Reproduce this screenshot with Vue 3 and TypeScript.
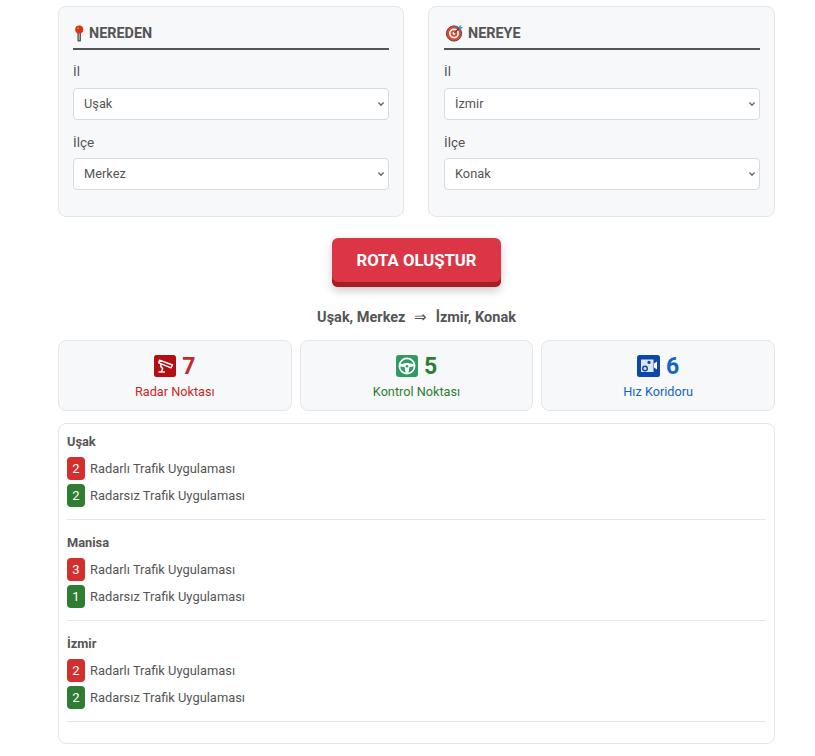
<script setup lang="ts">
type Row = { count: number; label: string; tone: 'red' | 'green' }
type Region = { name: string; rows: Row[] }

const forms = [
  { title: 'NEREDEN', il: 'Uşak', ilce: 'Merkez', kind: 'pin' },
  { title: 'NEREYE', il: 'İzmir', ilce: 'Konak', kind: 'target' },
]

const stats = [
  { count: 7, label: 'Radar Noktası', tone: 'red' },
  { count: 5, label: 'Kontrol Noktası', tone: 'green' },
  { count: 6, label: 'Hız Koridoru', tone: 'blue' },
]

const radarli = 'Radarlı Trafik Uygulaması'
const radarsiz = 'Radarsız Trafik Uygulaması'

const regions: Region[] = [
  { name: 'Uşak', rows: [{ count: 2, label: radarli, tone: 'red' }, { count: 2, label: radarsiz, tone: 'green' }] },
  { name: 'Manisa', rows: [{ count: 3, label: radarli, tone: 'red' }, { count: 1, label: radarsiz, tone: 'green' }] },
  { name: 'İzmir', rows: [{ count: 2, label: radarli, tone: 'red' }, { count: 2, label: radarsiz, tone: 'green' }] },
]
</script>

<template>
  <div class="page">
    <div class="forms">
      <section v-for="f in forms" :key="f.title" class="panel">
        <h3 class="panel-title">
          <svg v-if="f.kind === 'pin'" width="12" height="17" viewBox="0 0 12 17">
            <rect x="4.4" y="6" width="3.6" height="10.6" rx="1.2" fill="#5f5a55" />
            <rect x="5.7" y="7.5" width="1.1" height="7.5" fill="#b9b4ac" />
            <circle cx="6.2" cy="4.4" r="4" fill="#e0300f" />
            <circle cx="5" cy="3.2" r="1" fill="#f57a5f" />
          </svg>
          <svg v-else width="20" height="18" viewBox="0 0 20 18">
            <circle cx="10" cy="9.5" r="7.6" fill="#e8452e" stroke="#4a4a4a" stroke-width="1" />
            <circle cx="10" cy="9.5" r="5" fill="#fff" />
            <circle cx="10" cy="9.5" r="3.3" fill="#e8452e" />
            <circle cx="10" cy="9.5" r="1.4" fill="#fff" />
            <path d="M10.5 9 15.5 3.8" stroke="#3d4a55" stroke-width="1.4" />
            <path d="M14 3.2 16.5 1 17 2.8 19 3.2 16.4 5.8Z" fill="#3d9be0" />
          </svg>
          {{ f.title }}
        </h3>
        <label class="field-label">İl</label>
        <select class="field"><option>{{ f.il }}</option></select>
        <label class="field-label">İlçe</label>
        <select class="field"><option>{{ f.ilce }}</option></select>
      </section>
    </div>

    <div class="action">
      <button class="route-btn" type="button">ROTA OLUŞTUR</button>
    </div>

    <p class="summary">Uşak, Merkez <span class="arrow">⇒</span> İzmir, Konak</p>

    <div class="stats">
      <div v-for="s in stats" :key="s.label" class="stat" :class="s.tone">
        <div class="stat-top">
          <svg v-if="s.tone === 'red'" width="22" height="22" viewBox="0 0 22 22">
            <rect width="22" height="22" rx="2.5" fill="#b30f12" />
            <path d="M5.5 5.2 18.5 10 17 12.8 4.8 7.8Z" fill="none" stroke="#fff" stroke-width="1.4" stroke-linejoin="round" />
            <path d="M7 9 C6.4 11 7 12.6 8.6 13.4 L7.6 16.6 M4.5 17 H11" fill="none" stroke="#fff" stroke-width="1.4" />
          </svg>
          <svg v-else-if="s.tone === 'green'" width="22" height="22" viewBox="0 0 22 22">
            <rect width="22" height="22" rx="3" fill="#2f9a62" />
            <circle cx="11" cy="11" r="7.6" fill="none" stroke="#fff" stroke-width="1.7" />
            <path d="M3.6 9.6 11 7.8 18.4 9.6 18 11.5 13.5 12 12.4 18H9.6L8.5 12 4 11.5Z" fill="#fff" />
            <circle cx="11" cy="11.2" r="1.3" fill="#2f9a62" />
          </svg>
          <svg v-else width="23" height="22" viewBox="0 0 23 22">
            <rect width="23" height="22" rx="2.5" fill="#0d47a8" />
            <path d="M4 4.5H16.5V17H4Z" fill="#dbe6f5" />
            <path d="M17 8.5 20 6.5V14.5L17 12.5Z" fill="#fff" />
            <circle cx="8" cy="13.6" r="3" fill="#0d47a8" />
            <circle cx="8" cy="13.6" r="1.5" fill="#dbe6f5" />
            <circle cx="12" cy="7.4" r="1.6" fill="#0d47a8" />
          </svg>
          <span class="stat-count">{{ s.count }}</span>
        </div>
        <div class="stat-label">{{ s.label }}</div>
      </div>
    </div>

    <div class="list">
      <div v-for="r in regions" :key="r.name" class="region">
        <div class="region-name">{{ r.name }}</div>
        <div v-for="row in r.rows" :key="row.label" class="row">
          <span class="badge" :class="row.tone">{{ row.count }}</span>
          <span>{{ row.label }}</span>
        </div>
      </div>
    </div>
  </div>
</template>

<style>
html, body {
  background: #fff;
}
</style>

<style scoped>
.page {
  box-sizing: border-box;
  width: 815px;
  padding: 6px 40px 12px 58px;
  font-family: Roboto, "Liberation Sans", sans-serif;
  color: #555;
}

.forms {
  display: grid;
  grid-template-columns: 346px 347px;
  gap: 24px;
}

.panel {
  box-sizing: border-box;
  height: 211px;
  padding: 17px 14px 14px;
  background: #f7f8fa;
  border: 1px solid #e4e6e9;
  border-radius: 8px;
}

.panel:last-child {
  padding-left: 15px;
}

.panel-title {
  display: flex;
  align-items: center;
  gap: 4px;
  box-sizing: content-box;
  height: 18px;
  margin: 0 0 13px;
  padding-bottom: 6px;
  font-size: 14.4px;
  font-weight: 700;
  color: #555;
  border-bottom: 2px solid #555;
}

.field-label {
  display: block;
  height: 17px;
  margin-bottom: 7px;
  font-size: 13.5px;
  line-height: 17px;
}

.panel-title + .field-label {
  margin-bottom: 8px;
}

.field {
  display: block;
  box-sizing: border-box;
  width: 100%;
  height: 32px;
  margin-bottom: 14px;
  padding: 0 10px 1px;
  font-family: inherit;
  font-size: 12.8px;
  color: #555;
  appearance: none;
  background: #fff url("data:image/svg+xml,%3Csvg xmlns='http://www.w3.org/2000/svg' width='8' height='6' viewBox='0 0 8 6'%3E%3Cpath d='M1.4 1.5 4 4.2 6.6 1.5' fill='none' stroke='%23666' stroke-width='1.3'/%3E%3C/svg%3E") no-repeat right 3px center;
  border: 1px solid #d8dade;
  border-radius: 4px;
}

.action {
  display: flex;
  justify-content: center;
  margin-top: 21px;
}

.route-btn {
  width: 169px;
  height: 49px;
  padding: 0 0 5px;
  font-family: inherit;
  font-size: 16.7px;
  font-weight: 700;
  color: #fff;
  background: #dc3545;
  border: 0;
  border-radius: 6px;
  box-shadow: inset 0 -5px 0 #a71d22, 0 4px 10px rgba(0, 0, 0, 0.2);
}

.summary {
  margin: 22px 0 14px;
  font-size: 14.5px;
  line-height: 17px;
  font-weight: 700;
  text-align: center;
}

.arrow {
  margin: 0 5px;
  font-weight: 400;
}

.stats {
  display: grid;
  grid-template-columns: repeat(3, 1fr);
  gap: 8px;
}

.stat {
  box-sizing: border-box;
  height: 71px;
  padding-top: 13px;
  text-align: center;
  background: #f7f8fa;
  border: 1px solid #e4e6e9;
  border-radius: 8px;
}

.stat-top {
  display: flex;
  justify-content: center;
  align-items: center;
  gap: 6px;
  height: 24px;
}

.stat-count {
  font-size: 23px;
  font-weight: 700;
}

.stat-label {
  margin-top: 6px;
  font-size: 12.7px;
  line-height: 16px;
}

.stat.red { color: #c62828; }
.stat.green { color: #2e7d32; }
.stat.blue { color: #1565c0; }

.list {
  box-sizing: border-box;
  height: 321px;
  margin-top: 12px;
  padding: 9px 8px 8px;
  background: #fff;
  border: 1px solid #e4e6e9;
  border-radius: 8px;
}

.region {
  height: 86px;
  margin-bottom: 14px;
  border-bottom: 1px solid #e6e7e9;
}

.region-name {
  height: 18px;
  margin-bottom: 6px;
  font-size: 12.8px;
  line-height: 18px;
  font-weight: 700;
}

.row {
  display: flex;
  align-items: center;
  gap: 5px;
  height: 23px;
  margin-bottom: 4px;
  font-size: 12.9px;
}

.badge {
  display: flex;
  align-items: center;
  justify-content: center;
  width: 18px;
  height: 23px;
  color: #fff;
  font-size: 13px;
  font-weight: 400;
  border-radius: 4px;
}

.badge.red { background: #d32f2f; }
.badge.green { background: #2e7d32; }
</style>
